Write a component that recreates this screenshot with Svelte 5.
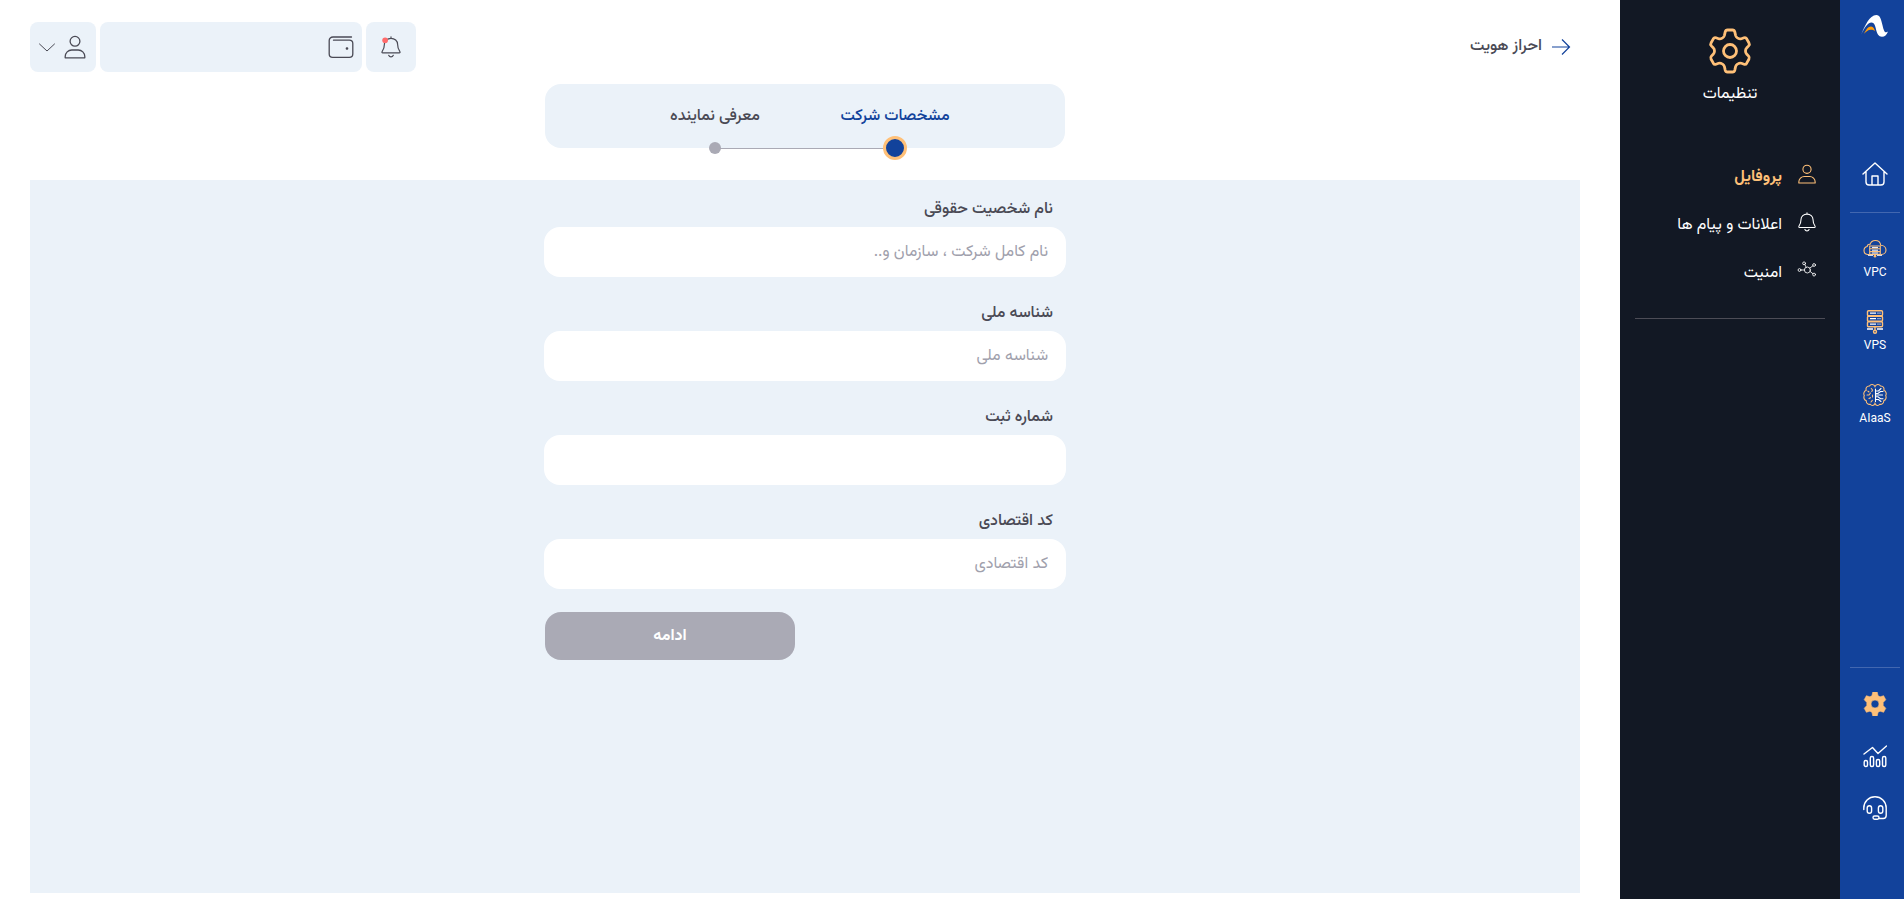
<script>
  const fields = [
    { id: 'company-name', label: 'نام شخصیت حقوقی', placeholder: 'نام کامل شرکت ، سازمان و..' },
    { id: 'national-id', label: 'شناسه ملی', placeholder: 'شناسه ملی' },
    { id: 'registration', label: 'شماره ثبت', placeholder: '' },
    { id: 'economic-code', label: 'کد اقتصادی', placeholder: 'کد اقتصادی' }
  ];
</script>

{#snippet person()}
  <circle cx="12" cy="6.3" r="4.9" />
  <path d="M2.2 22.8v-1.2c0-3.8 3-6.600 6.600-6.600h6.400c3.600 0 6.600 2.800 6.600 6.600v1.200z" />
{/snippet}

{#snippet bell()}
  <path d="M12 1v1.500M3 18.500c-.8 0-1.200-.8-.7-1.400 1.900-2.400 2.500-4.600 2.500-8C4.800 5.200 8 2.500 12 2.500s7.200 2.700 7.200 6.600c0 3.400.6 5.600 2.500 8 .5.600.1 1.400-.7 1.400z" />
  <path d="M9.500 21c.5 1.200 1.400 1.700 2.500 1.700s2-.5 2.500-1.700" />
{/snippet}

<div class="app" dir="rtl" lang="fa">
  <nav class="rail">
    <a class="logo" href="#home" aria-label="Logo">
      <svg width="28" height="22" viewBox="0 0 28 22">
        <path fill="#fff" d="M0 20C3.500 11.500 8.500 0 15.300 0c3.700 0 4.700 4 6.200 10.200 1 4.300 1.800 7 3.500 7 .7 0 1.400-.3 2-.8-1.300 3.400-3.300 5.300-6 5.300-3.500 0-4.800-3.200-5.900-7C14.100 10.600 13.300 7.600 10.500 7.600 6.500 7.600 3.200 13.500 0 20z" />
        <path fill="#ff9d0a" d="M3 18.800C5 14.800 7 11.600 10 11.600c2.500 0 3.300 2.200 4 4.700-1.400-1.300-2.800-1.600-4.300-1.500-2.500.1-4.500 1.900-6.700 4z" />
      </svg>
    </a>
    <a class="home" href="#dashboard" aria-label="Home">
      <svg width="26" height="24" viewBox="0 0 26 24" class="line">
        <path d="M1 12 13 1l12 11M4 9.500V20c0 1.700 1.300 3 3 3h12c1.700 0 3-1.300 3-3V9.500M10 23v-9h6v9" />
      </svg>
    </a>
    <div class="services">
      <a href="#vpc">
        <svg width="24" height="24" viewBox="0 0 24 24">
          <g fill="none" stroke="#ffc078" stroke-width="1.100">
            <path d="M6 17.500H4.500A4 4 0 0 1 1 13.500c0-2 1.200-3.600 3.200-4C4.200 8 5.600 7 7 7.400 7.800 5 9.700 3.500 12.200 3.500c3 0 5.200 2 5.500 4.800 3 .1 5.300 2 5.300 4.700 0 2.600-2 4.500-4.700 4.500H18" />
            <path d="M6.700 9h10.600v2.800H6.700zM6.700 11.800h10.600v2.800H6.700zM6.700 14.600h10.600v2.800H6.700zM12 17.500v2.500" />
          </g>
          <path d="M9 10.400h6M9 13.200h6M9 16h6M5 18.300h5M14 18.300h5" stroke="#fff" stroke-width="1" />
          <circle cx="12" cy="19.300" r="1.300" fill="#ffc078" />
        </svg>
        <span>VPC</span>
      </a>
      <a href="#vps">
        <svg width="24" height="24" viewBox="0 0 24 24">
          <g fill="none" stroke="#ffc078" stroke-width="1.400">
            <rect x="4.500" y=".8" width="15" height="4.900" rx="1" />
            <rect x="4.500" y="6.300" width="15" height="4.900" rx="1" />
            <rect x="4.500" y="11.800" width="15" height="4.900" rx="1" />
            <path d="M12 17v4" />
            <circle cx="12" cy="21.800" r="1.500" />
          </g>
          <path d="M7 3.200h6M14.500 3.200h1M16.500 3.200h1M7 8.700h6M14.500 8.700h1M16.500 8.700h1M7 14.200h6M14.500 14.200h1M16.500 14.200h1M4 19h6M14 19h6" stroke="#fff" stroke-width="1.300" />
        </svg>
        <span>VPS</span>
      </a>
      <a href="#aiaas">
        <svg width="24" height="24" viewBox="0 0 24 24" fill="none" stroke-width="1.100" stroke-linecap="round">
          <path stroke="#ffc078" d="M12 3.500C11 1 7.700.8 6.500 3 3.700 2.800 2.500 5.200 3.200 7.200.8 8.200.3 11 1.300 12.500.3 15 1.300 17 3.300 17.800c-.2 2.300 1.900 4 4 3.500 1.200 1.800 4 1.500 4.700-.8.700 2.300 3.500 2.600 4.700.8 2.100.5 4.200-1.200 4-3.500 2-.8 3-2.800 2-5.300 1-1.500.5-4.300-1.900-5.300.7-2-.5-4.400-3.300-4.200C16.300.8 13 1 12 3.500z" />
          <path stroke="#ffc078" d="M4 12h2l1.500-2M8.300 5.500 9.500 7 8.800 8.500M5 8.200l1 .8M9.500 12v2M6 15.500l1.500-.8M8 19l1.300-1.700" />
          <path stroke="#fff" d="M12.500 6v12.500M12.500 12h7M20 8.500h-2.500L15 10.500h-2.500M12.500 13.800H15l2.500 2H20M18 5.500 15.500 8h-3M18 18.500 15.500 16.500h-3" />
        </svg>
        <span>AIaaS</span>
      </a>
    </div>
    <div class="tools">
      <a href="#settings" aria-label="Settings">
        <svg width="24" height="24" viewBox="0 0 24 24">
          <path fill="#ffc078" fill-rule="evenodd" d="M9.800 0h4.400l.9 3.700 2 1.100 3.500-1.100 2.200 4L20.200 10.400v3.200l2.600 2.700-2.200 4-3.500-1.100-2 1.100-.9 3.700H9.800l-.9-3.700-2-1.100-3.500 1.100-2.200-4 2.600-2.700v-3.200L1.200 7.700l2.200-4 3.500 1.100 2-1.100zM12 8a4 4 0 1 0 0 8 4 4 0 0 0 0-8z" stroke="#ffc078" stroke-width=".6" stroke-linejoin="round" />
        </svg>
      </a>
      <a href="#reports" aria-label="Reports">
        <svg width="24" height="24" viewBox="0 0 24 24" class="line">
          <path d="m1 10 8.500-6.500L15 9.500 23.500 2" />
          <rect x="1.200" y="16.500" width="3.300" height="6" rx="1.500" />
          <rect x="7.300" y="12.500" width="3.300" height="10" rx="1.500" />
          <rect x="13.400" y="15.500" width="3.300" height="7" rx="1.500" />
          <rect x="19.500" y="12.500" width="3.300" height="10" rx="1.500" />
        </svg>
      </a>
      <a href="#support" aria-label="Support">
        <svg width="24" height="24" viewBox="0 0 24 24" class="line">
          <path d="M.8 13.500V12a11.200 11.200 0 0 1 22.400 0v7.500c0 1.700-1.300 3-3 3H16" />
          <rect x="4.200" y="9.700" width="4.400" height="7.600" rx="2.200" />
          <rect x="15.400" y="9.700" width="4.400" height="7.600" rx="2.200" />
          <rect x="10" y="20" width="6" height="3.200" rx="1.600" />
        </svg>
      </a>
    </div>
  </nav>

  <aside class="panel">
    <div class="title">
      <svg width="44" height="46" viewBox="0 0 44 46" fill="none" stroke="#ffc078" stroke-width="2.800" stroke-linejoin="round">
        <path d="M19.500 2h5c1.200 0 2 .7 2.300 1.900l.8 3.600c.3 1.200.8 1.800 1.800 2.400l.9.500c1 .6 2 .7 3.100.3l2.600-.9c1.100-.4 2.100 0 2.700 1l2.300 4.200c.6 1 .4 2-.4 2.900l-2 2.100c-.8.800-1.100 1.700-1.100 3s.3 2.200 1.100 3l2 2.100c.8.900 1 1.900.4 2.900l-2.300 4.200c-.6 1-1.600 1.400-2.700 1l-2.600-.9c-1.100-.4-2.100-.3-3.100.3l-.9.500c-1 .6-1.500 1.200-1.800 2.400l-.8 3.600C26.500 43.300 25.700 44 24.500 44h-5c-1.200 0-2-.7-2.300-1.900l-.8-3.600c-.3-1.200-.8-1.800-1.800-2.400l-.9-.5c-1-.6-2-.7-3.100-.3l-2.600.9c-1.100.4-2.100 0-2.700-1L3 31c-.6-1-.4-2 .4-2.900l2-2.100c.8-.8 1.100-1.700 1.100-3s-.3-2.200-1.100-3l-2-2.100C2.600 17 2.400 16 3 15l2.300-4.200c.6-1 1.600-1.400 2.700-1l2.600.9c1.100.4 2.100.3 3.100-.3l.9-.5c1-.6 1.500-1.200 1.800-2.400l.8-3.600C17.500 2.700 18.300 2 19.500 2z" />
        <circle cx="22" cy="23" r="6.500" />
      </svg>
      <span>تنظیمات</span>
    </div>
    <ul class="menu">
      <li><a class="active" href="#profile">
        <svg width="20" height="20" viewBox="0 0 24 24" class="icon">{@render person()}</svg><span>پروفایل</span></a></li>
      <li><a href="#messages">
        <svg width="20" height="20" viewBox="0 0 24 24" class="icon">{@render bell()}</svg><span>اعلانات و پیام ها</span></a></li>
      <li><a href="#security">
        <svg width="20" height="20" viewBox="0 0 24 24" class="icon thin">
          <circle cx="12.500" cy="12" r="3.600" />
          <circle cx="3" cy="12" r="1.700" />
          <circle cx="8.500" cy="4" r="1.700" />
          <circle cx="20.500" cy="6" r="1.700" />
          <circle cx="20.500" cy="17.500" r="1.700" />
          <path d="M4.700 12h4.200M9.500 5.500l1.500 3.200M15.300 9.700l3.800-2.700M15.700 13.700l3.300 2.700" />
        </svg><span>امنیت</span></a></li>
    </ul>
  </aside>

  <main>
    <header>
      <a class="back" href="#back">
        <svg width="20" height="18" viewBox="0 0 20 18" fill="none" stroke="#12429b" stroke-width="1.200"><path d="M1 9h17.500M11 1.500 18.500 9 11 16.500" /></svg>
        <span>احراز هویت</span>
      </a>
      <div class="actions">
        <button class="chip notify" aria-label="Notifications">
          <svg width="22" height="24" viewBox="0 0 24 24" class="icon">{@render bell()}<circle class="dot" cx="5.600" cy="4.600" r="3.100" /></svg>
        </button>
        <button class="chip wallet" aria-label="Wallet">
          <svg width="26" height="24" viewBox="0 0 26 24" class="icon">
            <path d="M23.500 2H5C2.800 2 1.200 3.500 1.200 5.500V19c0 2 1.500 3.300 3.500 3.300h16.600c2 0 3.500-1.300 3.500-3.300V8.500c0-2-1.500-3.300-3.500-3.300H5.500" />
            <circle cx="19" cy="13.500" r=".7" fill="currentColor" />
          </svg>
        </button>
        <button class="chip user" aria-label="Account">
          <svg width="24" height="26" viewBox="0 0 24 24" class="icon">{@render person()}</svg>
          <svg width="16" height="9" viewBox="0 0 16 9" class="icon thin"><path d="m.5 1 7.500 7 7.500-7" /></svg>
        </button>
      </div>
    </header>

    <ol class="stepper">
      <li class="current">مشخصات شرکت</li>
      <li>معرفی نماینده</li>
    </ol>

    <section class="content">
      <form>
        {#each fields as field (field.id)}
          <div class="field">
            <label for={field.id}>{field.label}</label>
            <input id={field.id} type="text" placeholder={field.placeholder} />
          </div>
        {/each}
        <button class="submit" type="button">ادامه</button>
      </form>
    </section>
  </main>
</div>

<style>
  :global(body) { margin: 0; background: #fff; }
  .app, .app *, .app *::before, .app *::after { box-sizing: border-box; }
  .app {
    display: flex;
    min-height: 100vh;
    font-family: Vazirmatn, Roboto, "DejaVu Sans", sans-serif;
    font-size: 16px;
    line-height: 24px;
    color: #4a4a55;
  }
  a { color: inherit; text-decoration: none; }
  svg { display: block; flex: none; }
  .icon { fill: none; stroke: currentColor; stroke-width: 1.3; stroke-linecap: round; stroke-linejoin: round; }
  .thin { stroke-width: 1; }
  .line { fill: none; stroke: #fff; stroke-width: 1.4; stroke-linecap: round; stroke-linejoin: round; }

  .rail {
    width: 64px;
    flex: none;
    display: flex;
    flex-direction: column;
    background: #12429b;
    color: #fff;
    font-size: 12px;
    line-height: 16px;
  }
  .rail a { display: flex; flex-direction: column; align-items: center; }
  .logo, .home { padding-left: 6px; }
  .logo { padding-top: 15px; }
  .home { margin-top: 125px; }
  .services, .tools {
    display: flex;
    flex-direction: column;
    margin: 0 4px 0 10px;
    border-top: 1px solid #4267b0;
  }
  .services { margin-top: 26px; padding-top: 24px; gap: 29px; }
  .services a { gap: 4px; }
  .tools { margin-top: auto; padding: 24px 0 79px; gap: 28px; }

  .panel {
    width: 220px;
    flex: none;
    background: #121824;
    color: #fff;
    padding: 28px 15px;
  }
  .title { display: flex; flex-direction: column; align-items: center; gap: 9px; }
  .menu {
    list-style: none;
    margin: 51px 0 0;
    padding: 0 8px 32px;
    border-bottom: 1px solid #4c4c56;
    display: flex;
    flex-direction: column;
    gap: 16px;
  }
  .menu a { display: flex; align-items: center; gap: 15px; }
  .menu span { padding-top: 8px; }
  .menu .active { color: #ffc078; font-weight: 700; }

  main { flex: 1; min-width: 0; padding: 22px 40px 6px 30px; display: flex; flex-direction: column; }
  header { display: flex; justify-content: space-between; align-items: center; }
  .back { display: flex; align-items: center; gap: 9px; padding-right: 9px; font-weight: 500; }
  .actions { display: flex; gap: 4px; }
  .chip {
    height: 50px;
    border: 0;
    border-radius: 8px;
    background: #ebf2f9;
    color: #4a4a55;
    display: flex;
    align-items: center;
    padding: 0 8px;
  }
  .notify { width: 50px; justify-content: center; }
  .wallet { width: 262px; }
  .user { width: 66px; padding: 0 9px; gap: 8px; }
  .dot { fill: #ff6b6b; stroke: none; }

  .stepper {
    list-style: none;
    display: flex;
    justify-content: center;
    align-self: center;
    width: 520px;
    height: 64px;
    margin: 12px 0 32px;
    padding: 0;
    border-radius: 16px;
    background: #ebf2f9;
    font-weight: 500;
  }
  .stepper li { position: relative; width: 180px; padding-top: 21px; text-align: center; }
  .stepper li::after {
    content: "";
    position: absolute;
    left: 50%;
    top: 100%;
    width: 12px;
    height: 12px;
    border-radius: 50%;
    background: #aaaab5;
    transform: translate(-50%, -50%);
  }
  .stepper .current { color: #12429b; }
  .stepper .current::after { width: 24px; height: 24px; border: 3px solid #ffc078; background: #12429b; }
  .stepper .current::before {
    content: "";
    position: absolute;
    right: 50%;
    top: 100%;
    width: 100%;
    height: 1px;
    background: #aaaab5;
  }

  .content { flex: 1; background: #ebf2f9; padding: 15px 0 40px; }
  form { width: 522px; margin: 0 auto; display: flex; flex-direction: column; gap: 22px; }
  .field { display: flex; flex-direction: column; gap: 2px; }
  label { line-height: 30px; padding-right: 13px; font-weight: 500; }
  input {
    height: 50px;
    width: 100%;
    border: 0;
    border-radius: 16px;
    background: #fff;
    padding: 0 18px;
    font: inherit;
    color: inherit;
  }
  input::placeholder { color: #a0a0ac; opacity: 1; }
  .submit {
    align-self: flex-end;
    width: 250px;
    height: 48px;
    margin: 1px 0 0 1px;
    padding: 2px 0 0;
    border: 0;
    border-radius: 16px;
    background: #aaaab5;
    color: #fff;
    font: inherit;
    font-weight: 700;
  }
</style>
